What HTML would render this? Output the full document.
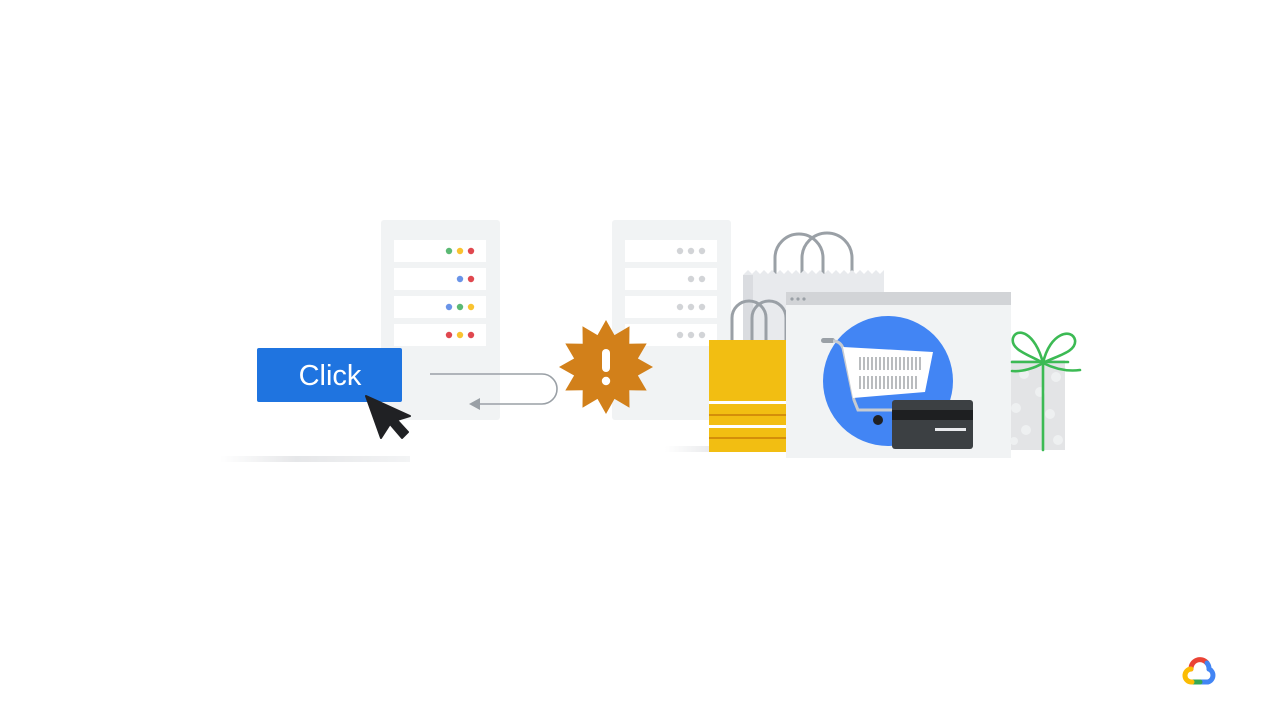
<!DOCTYPE html>
<html><head><meta charset="utf-8"><style>
html,body{margin:0;padding:0;background:#fff;width:1280px;height:720px;overflow:hidden}
svg{display:block}
</style></head><body>
<svg width="1280" height="720" viewBox="0 0 1280 720" xmlns="http://www.w3.org/2000/svg">
<defs>
<linearGradient id="sh" x1="0" x2="1"><stop offset="0" stop-color="#fff"/><stop offset="0.4" stop-color="#e6e7e9"/><stop offset="1" stop-color="#f3f4f5"/></linearGradient>
<linearGradient id="sh2" x1="0" x2="1"><stop offset="0" stop-color="#fff"/><stop offset="1" stop-color="#e8e9eb"/></linearGradient>
</defs>
<rect x="220" y="456" width="190" height="6" fill="url(#sh)"/>
<rect x="665" y="446" width="50" height="6" fill="url(#sh2)"/>
<!-- server 1 -->
<rect x="381" y="220" width="119" height="200" rx="3" fill="#f1f3f4"/>
<g fill="#fff">
<rect x="394" y="240" width="92" height="22"/><rect x="394" y="268" width="92" height="22"/>
<rect x="394" y="296" width="92" height="22"/><rect x="394" y="324" width="92" height="22"/></g>
<circle cx="449" cy="251" r="3.2" fill="#5bb974"/><circle cx="460" cy="251" r="3.2" fill="#f9c330"/><circle cx="471" cy="251" r="3.2" fill="#e0484f"/>
<circle cx="460" cy="279" r="3.2" fill="#6a94e8"/><circle cx="471" cy="279" r="3.2" fill="#e0484f"/>
<circle cx="449" cy="307" r="3.2" fill="#6a94e8"/><circle cx="460" cy="307" r="3.2" fill="#5bb974"/><circle cx="471" cy="307" r="3.2" fill="#f9c330"/>
<circle cx="449" cy="335" r="3.2" fill="#e0484f"/><circle cx="460" cy="335" r="3.2" fill="#f9c330"/><circle cx="471" cy="335" r="3.2" fill="#e0484f"/>
<!-- server 2 -->
<rect x="612" y="220" width="119" height="200" rx="3" fill="#f1f3f4"/>
<g fill="#fff">
<rect x="625" y="240" width="92" height="22"/><rect x="625" y="268" width="92" height="22"/>
<rect x="625" y="296" width="92" height="22"/><rect x="625" y="324" width="92" height="22"/></g>
<g fill="#d2d4d7">
<circle cx="680" cy="251" r="3.2"/><circle cx="691" cy="251" r="3.2"/><circle cx="702" cy="251" r="3.2"/>
<circle cx="691" cy="279" r="3.2"/><circle cx="702" cy="279" r="3.2"/>
<circle cx="680" cy="307" r="3.2"/><circle cx="691" cy="307" r="3.2"/><circle cx="702" cy="307" r="3.2"/>
<circle cx="680" cy="335" r="3.2"/><circle cx="691" cy="335" r="3.2"/><circle cx="702" cy="335" r="3.2"/></g>
<path d="M430 374 H542 A15 15 0 0 1 542 404 H478" fill="none" stroke="#9aa0a6" stroke-width="1.6"/>
<path d="M469 404 L480 398 L480 410 Z" fill="#9aa0a6"/>
<!-- click button -->
<rect x="257" y="348" width="145" height="54" rx="2" fill="#1f74e0"/>
<text x="330" y="385" text-anchor="middle" font-family="Liberation Sans, sans-serif" font-size="29" fill="#fff">Click</text>
<path d="M366 396 L381 438 L390 424 L402 438 L408 432 L397 420 L410 416 Z" fill="#202124" stroke="#202124" stroke-width="2" stroke-linejoin="round"/>
<!-- starburst -->
<polygon fill="#d2801a" points="606,320 614.5,335.1 629.5,326.3 629.3,343.7 646.7,343.5 637.9,358.5 653,367 637.9,375.5 646.7,390.5 629.3,390.3 629.5,407.7 614.5,398.9 606,414 597.5,398.9 582.5,407.7 582.7,390.3 565.3,390.5 574.1,375.5 559,367 574.1,358.5 565.3,343.5 582.7,343.7 582.5,326.3 597.5,335.1"/>
<rect x="602" y="349" width="8" height="23" rx="4" fill="#fff"/>
<circle cx="606" cy="381" r="4.2" fill="#fff"/>
<!-- back bag -->
<g fill="none" stroke="#9aa0a6" stroke-width="3">
<path d="M775 275 V258 A24 24 0 0 1 823 258 V275"/>
<path d="M802 275 V258 A24 24 0 0 1 852 258 V275"/>
</g>
<path d="M743 275 L748 270 L752 274 L756 270 L760 274 L764 270 L768 274 L772 270 L776 274 L780 270 L784 274 L788 270 L792 274 L796 270 L800 274 L804 270 L808 274 L812 270 L816 274 L820 270 L824 274 L828 270 L832 274 L836 270 L840 274 L844 270 L848 274 L852 270 L856 274 L860 270 L864 274 L868 270 L872 274 L876 270 L880 274 L884 270 L884 345 L743 345 Z" fill="#e8eaed"/>
<rect x="743" y="275" width="10" height="70" fill="#dadce0"/>
<!-- yellow bag -->
<g fill="none" stroke="#9aa0a6" stroke-width="3">
<path d="M732 342 V318 A17 17 0 0 1 766 318 V342"/>
<path d="M752 342 V318 A17 17 0 0 1 786 318 V342"/>
</g>
<rect x="709" y="340" width="80" height="112" fill="#f2be12"/>
<rect x="709" y="401" width="80" height="3" fill="#fff"/>
<rect x="709" y="425" width="80" height="3" fill="#fff"/>
<rect x="709" y="414" width="80" height="2" fill="#d48e0a"/>
<rect x="709" y="437" width="80" height="2" fill="#d48e0a"/>
<!-- browser -->
<rect x="786" y="292" width="225" height="166" fill="#f1f3f4"/>
<rect x="786" y="292" width="225" height="13" fill="#d2d4d7"/>
<g fill="#9aa0a6"><circle cx="792" cy="299" r="1.6"/><circle cx="798" cy="299" r="1.6"/><circle cx="804" cy="299" r="1.6"/></g>
<circle cx="888" cy="381" r="65" fill="#4285f4"/>
<rect x="821" y="338" width="14" height="5" rx="2.5" fill="#9aa0a6"/>
<path d="M833 341 Q840 341 843 348 L854 400 L858 410 L895 410" fill="none" stroke="#c7cbd1" stroke-width="3"/>
<polygon points="843,347 933,352 925,392 853,398" fill="#fff"/>
<g stroke="#a8abaf" stroke-width="1.6">
<path d="M860 357v13M864 357v13M868 357v13M872 357v13M876 357v13M880 357v13M884 357v13M888 357v13M892 357v13M896 357v13M900 357v13M904 357v13M908 357v13M912 357v13M916 357v13M920 357v13"/>
<path d="M860 376v13M864 376v13M868 376v13M872 376v13M876 376v13M880 376v13M884 376v13M888 376v13M892 376v13M896 376v13M900 376v13M904 376v13M908 376v13M912 376v13M916 376v13"/>
</g>
<circle cx="878" cy="420" r="5" fill="#202124"/>
<rect x="892" y="400" width="81" height="49" rx="3" fill="#3c4043"/>
<rect x="892" y="410" width="81" height="10" fill="#1e1f21"/>
<rect x="935" y="428" width="31" height="3" fill="#e8eaed"/>
<!-- gift -->
<rect x="1011" y="360" width="54" height="90" fill="#e3e4e6"/>
<g fill="#eef0f1"><circle cx="1024" cy="374" r="5"/><circle cx="1056" cy="377" r="5"/><circle cx="1040" cy="392" r="5"/><circle cx="1016" cy="408" r="5"/><circle cx="1050" cy="414" r="5"/><circle cx="1026" cy="430" r="5"/><circle cx="1058" cy="440" r="5"/><circle cx="1014" cy="441" r="4"/></g>
<g fill="none" stroke="#3cba54" stroke-width="2.6" stroke-linecap="round">
<path d="M1043 363 V450"/>
<path d="M1012 362 H1068"/>
<path d="M1043 363 C1030 355 1010 350 1013 338 C1017 327 1035 332 1043 363 C1050 332 1072 328 1075 340 C1077 352 1056 356 1043 363"/>
<path d="M1043 363 C1053 368 1065 372 1080 370"/>
<path d="M1043 363 C1035 368 1022 372 1012 371"/>
</g>
<g transform="translate(1183,657)" fill="none" stroke-width="5" stroke-linecap="round">
<path d="M8 12 A9 9 0 0 1 24 6" stroke="#ea4335"/>
<path d="M24 6 A9 9 0 0 1 26 12" stroke="#4285f4"/>
<path d="M26 12 A7 7 0 0 1 25 25 H17" stroke="#4285f4"/>
<path d="M17 25 H9" stroke="#34a853"/>
<path d="M9 25 A6.5 6.5 0 0 1 8 12" stroke="#fbbc04"/>
</g>
</svg>
</body></html>
